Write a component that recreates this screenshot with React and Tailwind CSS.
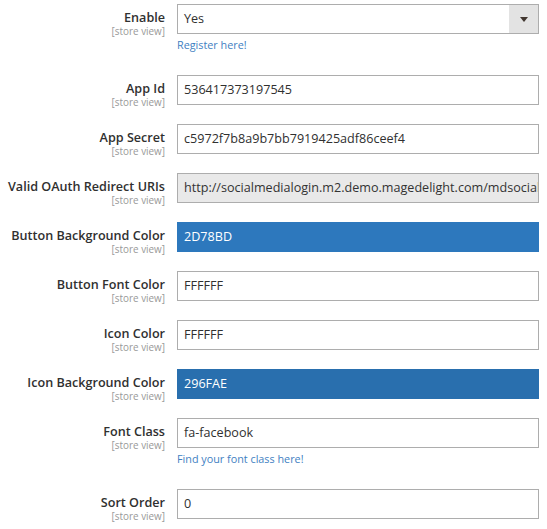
const fields = [
  { label: "Enable", type: "select", value: "Yes", note: "Register here!" },
  { label: "App Id", value: "536417373197545" },
  { label: "App Secret", value: "c5972f7b8a9b7bb7919425adf86ceef4" },
  {
    label: "Valid OAuth Redirect URIs",
    value: "http://socialmedialogin.m2.demo.magedelight.com/mdsocialogin/facebook/callback",
    disabled: true,
  },
  { label: "Button Background Color", value: "2D78BD", color: "btn" },
  { label: "Button Font Color", value: "FFFFFF" },
  { label: "Icon Color", value: "FFFFFF" },
  { label: "Icon Background Color", value: "296FAE", color: "icon" },
  { label: "Font Class", value: "fa-facebook", note: "Find your font class here!" },
  { label: "Sort Order", value: "0" },
];

const Field = ({ field }) => {
  let boxClass = "bg-white border-[#adadad] text-[#303030]";
  if (field.disabled) boxClass = "bg-[#e9e9e9] border-[#adadad] text-[#333333]";
  if (field.color === "btn") boxClass = "bg-[#2d78bd] border-[#2d78bd] text-white";
  if (field.color === "icon") boxClass = "bg-[#296fae] border-[#296fae] text-white";

  return (
    <div className="flex items-start mb-[19px]">
      {/* label column kept at input height, "[store view]" spills a bit below */}
      <div className="w-[165px] h-[30px] shrink-0 text-right pt-[6px]">
        <div className="text-[12.6px] leading-[15px] font-semibold text-[#303030] whitespace-nowrap">
          {field.label}
        </div>
        <div className="text-[9.9px] leading-[12px] text-[#999999]">[store view]</div>
      </div>
      <div className="ml-[12px] flex-1 min-w-0">
        {field.type === "select" ? (
          <div className="flex h-[30px] border border-[#adadad] bg-white">
            <div className="flex-1 pl-[6px] text-[12.6px] leading-[28px] text-[#303030]">{field.value}</div>
            <div className="w-[29px] bg-[#e3e3e3] flex items-center justify-center">
              <div className="w-0 h-0 border-l-[4px] border-r-[4px] border-t-[5px] border-l-transparent border-r-transparent border-t-[#41362f]" />
            </div>
          </div>
        ) : (
          <div
            className={`h-[30px] border px-[6px] text-[12.6px] leading-[28px] whitespace-nowrap overflow-hidden ${boxClass}`}
          >
            {field.value}
          </div>
        )}
        {field.note && (
          <div className="pt-[3px] pb-[3px] text-[10.8px] leading-[16px] text-[#3f7fc2]">{field.note}</div>
        )}
      </div>
    </div>
  );
};

export default function App() {
  return (
    <div
      className="w-[547px] h-[529px] bg-white pt-[4px] pr-[8px] overflow-hidden"
      style={{ fontFamily: "'Open Sans', sans-serif" }}
    >
      {fields.map((f) => (
        <Field key={f.label} field={f} />
      ))}
    </div>
  );
}
